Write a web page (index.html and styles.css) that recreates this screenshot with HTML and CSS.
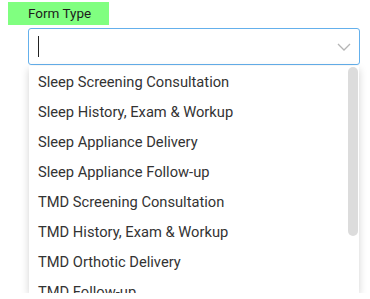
FILE: index.html
```html
<!DOCTYPE html>
<html lang="en">
<head>
    <meta charset="UTF-8">
    <meta name="viewport" content="width=device-width, initial-scale=1.0">
    <title>Form Type</title>
    <link rel="stylesheet" href="styles.css">
</head>
<body>
    <div class="field">
        <div class="field-label">Form Type</div>
        <div class="select">
            <div class="select-input">
                <span class="caret"></span>
                <svg class="chevron" width="14" height="8" viewBox="0 0 14 8"><path d="M1 1l6 6 6-6" fill="none" stroke="#b5b5b5" stroke-width="1.3"/></svg>
            </div>
            <div class="select-menu">
                <ul class="menu-list">
                    <li>Sleep Screening Consultation</li>
                    <li>Sleep History, Exam &amp; Workup</li>
                    <li>Sleep Appliance Delivery</li>
                    <li>Sleep Appliance Follow-up</li>
                    <li>TMD Screening Consultation</li>
                    <li>TMD History, Exam &amp; Workup</li>
                    <li>TMD Orthotic Delivery</li>
                    <li>TMD Follow-up</li>
                    <li>Sleep Study Review</li>
                    <li>Other</li>
                </ul>
                <div class="scroll-thumb"></div>
            </div>
        </div>
    </div>
</body>
</html>
```

FILE: styles.css
```css
body { margin: 0; padding: 2px 8px 0; font-family: Roboto, "Liberation Sans", sans-serif; background: #fff; color: #333; }
.field-label { display: inline-block; width: 81px; height: 23px; line-height: 22px; padding-left: 20px; background: #80ff80; color: #1c1c1c; font-size: 13.5px; vertical-align: top; }
.select { margin: 3px 0 0 20px; width: 332px; }
.select-input { display: flex; align-items: center; justify-content: space-between; height: 35px; padding: 0 8px 0 9px; border: 1px solid #64b0ec; border-radius: 3px; background: #fff; }
.caret { width: 1px; height: 21px; background: #222; }
.chevron { margin-top: 1px; }
.select-menu { position: relative; height: 227px; margin: 1px 1px 0; background: #fff; overflow: hidden; box-shadow: 0 3px 8px rgba(0,0,0,0.18); }
.menu-list { margin: 0; padding: 1px 0 0; list-style: none; }
.menu-list li { height: 30px; line-height: 30px; padding-left: 9px; font-size: 14.7px; color: #333; white-space: nowrap; }
.scroll-thumb { position: absolute; top: 1px; right: 1px; width: 10px; height: 169px; border-radius: 5px; background: #dcdcdc; }
```
